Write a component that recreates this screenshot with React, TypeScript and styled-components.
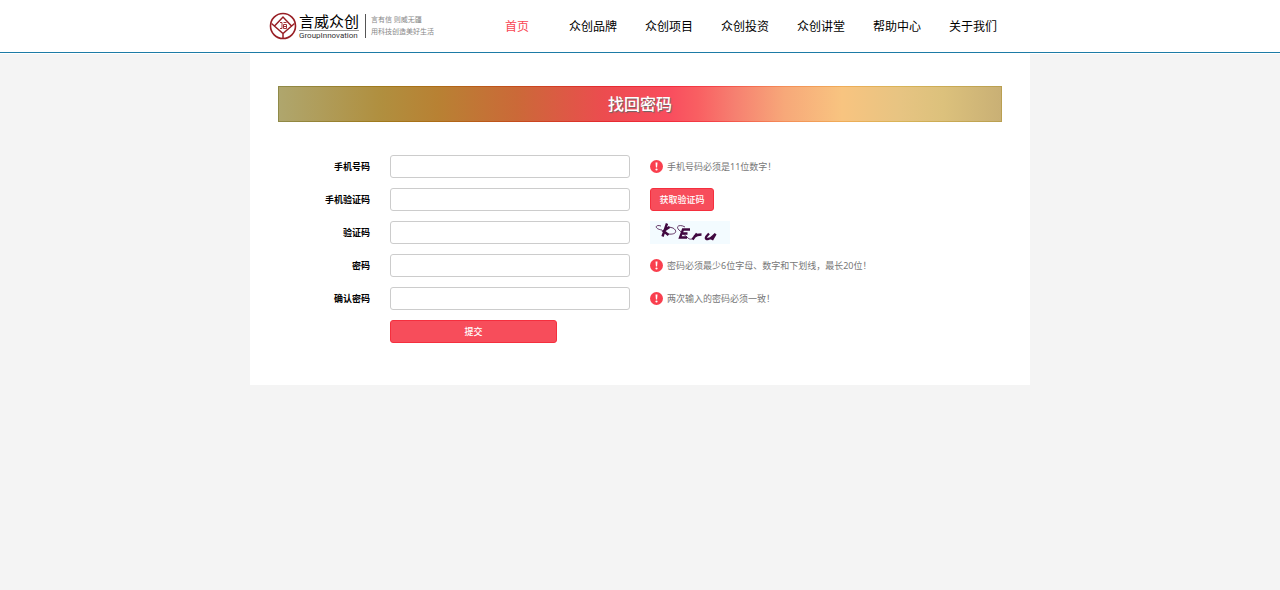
import React from "react";
import styled, { createGlobalStyle } from "styled-components";

const GlobalStyle = createGlobalStyle`
  * { box-sizing: border-box; }
  body {
    margin: 0;
    background: #f4f4f4;
    color: #000;
    font-family: "Noto Sans", "Noto Sans CJK SC", sans-serif;
    font-size: 9px;
  }
`;

const Header = styled.header`
  background: #fff;
  border-bottom: 1px solid #1d7ba6;
  box-shadow: 0 1px 0 #fff;
`;

const HeaderInner = styled.div`
  display: flex;
  align-items: center;
  justify-content: space-between;
  max-width: 780px;
  height: 52px;
  margin: 0 auto;
  padding: 0 19px;
`;

const Brand = styled.a`
  display: flex;
  align-items: center;
  color: inherit;
  text-decoration: none;
`;

const Emblem = styled.svg`
  width: 28px;
  height: 28px;
  margin-right: 2px;
`;

const BrandNames = styled.span`
  display: flex;
  flex-direction: column;
  padding-right: 6px;
`;

const BrandName = styled.span`
  border-bottom: 1px solid #999;
  font-size: 15px;
  line-height: 18px;
`;

const BrandLatin = styled.span`
  color: #333;
  font-family: Roboto, sans-serif;
  font-size: 8px;
  line-height: 10px;
`;

const Tagline = styled.span`
  display: flex;
  flex-direction: column;
  padding-left: 5px;
  border-left: 1px solid #555;
  color: #888;
  font-size: 7px;
  line-height: 12px;
`;

const Nav = styled.nav`
  display: flex;
  padding-top: 2px;
`;

const NavLink = styled.a<{ $active?: boolean }>`
  width: 76px;
  color: ${(p) => (p.$active ? "#f94552" : "#000")};
  font-size: 12px;
  line-height: 20px;
  text-align: center;
  text-decoration: none;
`;

const Card = styled.main`
  max-width: 780px;
  margin: 0 auto;
  padding: 33px 28px 42px;
  background: #fff;
`;

const Banner = styled.h1`
  margin: 0 0 33px;
  border: 1px solid transparent;
  background:
    linear-gradient(90deg, #afa66d, #b08f3f 14%, #b88133 22%, #cb6938 33%, #ec4c4f 45%, #f94d5e 54%,
      #f95f62 58%, #f67f70 63%, #f7a879 70%, #f8c480 78%, #e7c482 86%, #dcc17c 92%, #c9b075) padding-box,
    linear-gradient(90deg, #8f8a48, #a07a1c 14%, #ad6c16 22%, #c54c1c 33%, #e52a30 45%, #f32c3c 54%,
      #f54248 60%, #f58e58 70%, #f0ad58 78%, #d8b458 86%, #b99f50) border-box;
  color: #fff;
  font-size: 16px;
  font-weight: 500;
  line-height: 34px;
  text-align: center;
  text-shadow: 1px 1px 1px #666;
`;

const Form = styled.form`
  display: flex;
  flex-direction: column;
  gap: 10px;
`;

const Row = styled.div`
  display: grid;
  grid-template-columns: 92px 240px 1fr;
  column-gap: 20px;
  align-items: center;
  height: 23px;
`;

const Label = styled.label`
  font-weight: 700;
  text-align: right;
`;

const Input = styled.input`
  width: 100%;
  height: 23px;
  padding: 0 8px;
  border: 1px solid #ccc;
  border-radius: 3px;
  background: #fff;
  font: inherit;
`;

const Hint = styled.span`
  display: flex;
  align-items: center;
  gap: 4px;
  color: #777;
`;

const Button = styled.button<{ $wide?: boolean }>`
  grid-column: ${(p) => (p.$wide ? 2 : 3)};
  justify-self: start;
  width: ${(p) => (p.$wide ? 167 : 64)}px;
  height: 23px;
  padding: 0;
  border: 1px solid #f52f3e;
  border-radius: 3px;
  background: #f74d5b;
  color: #fff;
  font: inherit;
  font-weight: 500;
`;

const CaptchaImage = styled.svg`
  display: block;
  width: 80px;
  height: 23px;
  background: #f3fbff;
`;

function Alert() {
  return (
    <svg width="13" height="13" viewBox="0 0 13 13" aria-hidden="true">
      <circle cx="6.5" cy="6.5" r="6.5" fill="#f93f4e" />
      <path d="M5.500 2.400h2l-.4 5h-1.200z" fill="#fff" />
      <circle cx="6.5" cy="9.5" r="1.1" fill="#fff" />
    </svg>
  );
}

function Captcha() {
  return (
    <CaptchaImage viewBox="0 0 80 23" role="img" aria-label="验证码">
      <g fill="none" stroke="#400840">
        <path d="M17 2.500L12.500 15.500M19.500 6l-6 4 5 4" strokeWidth="2.400" />
        <path d="M12 9C4 8 5 3 11 5M18 13c8 1 10-3 5-6l-4-1" strokeWidth=".8" />
        <path d="M40 8.500h-7l-3 8h7M31.500 12.500h6" strokeWidth="2.300" />
        <path d="M35 6c-5-3-10-1-6 3l9 8c2 2 5 1 6 0" strokeWidth=".8" />
        <path d="M47 12.500l-4.500 6M44.500 15.500c2-2 4-2 7-2" strokeWidth="2.500" />
        <path d="M59 12.500c-4 4-4 6-1 5.500 3 0 4-2 7.500-5l-3.500 6" strokeWidth="2.400" />
      </g>
    </CaptchaImage>
  );
}

const links = ["首页", "众创品牌", "众创项目", "众创投资", "众创讲堂", "帮助中心", "关于我们"];

interface Field {
  id: string;
  label: string;
  type?: string;
  aside: React.ReactNode;
}

const fields: Field[] = [
  { id: "phone", label: "手机号码", type: "tel", aside: <Hint><Alert />手机号码必须是11位数字！</Hint> },
  { id: "sms", label: "手机验证码", aside: <Button type="button">获取验证码</Button> },
  { id: "captcha", label: "验证码", aside: <Captcha /> },
  { id: "password", label: "密码", type: "password", aside: <Hint><Alert />密码必须最少6位字母、数字和下划线，最长20位！</Hint> },
  { id: "confirm", label: "确认密码", type: "password", aside: <Hint><Alert />两次输入的密码必须一致！</Hint> },
];

export default function App() {
  return (
    <>
      <GlobalStyle />
      <Header lang="zh-CN">
        <HeaderInner>
          <Brand href="#">
            <Emblem viewBox="0 0 28 28" fill="none" stroke="#981e24" aria-hidden="true">
              <circle cx="14" cy="14" r="12.5" strokeWidth="1.6" />
              <path d="M2.500 11.500L14 21.500l11.500-10M5.500 14L14 5l8.500 9M14 21.500V27" strokeWidth="1.500" />
              <path d="M11 10.500h2v6h-2M14.500 10.500h3M14.500 12.500h3v4h-3zM14.500 14.500h3" strokeWidth=".9" />
            </Emblem>
            <BrandNames>
              <BrandName>言威众创</BrandName>
              <BrandLatin>GroupInnovation</BrandLatin>
            </BrandNames>
            <Tagline>
              <span>言有信 则威无疆</span>
              <span>用科技创造美好生活</span>
            </Tagline>
          </Brand>
          <Nav>
            {links.map((text, i) => (
              <NavLink key={text} href="#" $active={i === 0}>{text}</NavLink>
            ))}
          </Nav>
        </HeaderInner>
      </Header>
      <Card lang="zh-CN">
        <Banner>找回密码</Banner>
        <Form>
          {fields.map((f) => (
            <Row key={f.id}>
              <Label htmlFor={f.id}>{f.label}</Label>
              <Input id={f.id} type={f.type ?? "text"} />
              {f.aside}
            </Row>
          ))}
          <Row>
            <Button type="submit" $wide>提交</Button>
          </Row>
        </Form>
      </Card>
    </>
  );
}
